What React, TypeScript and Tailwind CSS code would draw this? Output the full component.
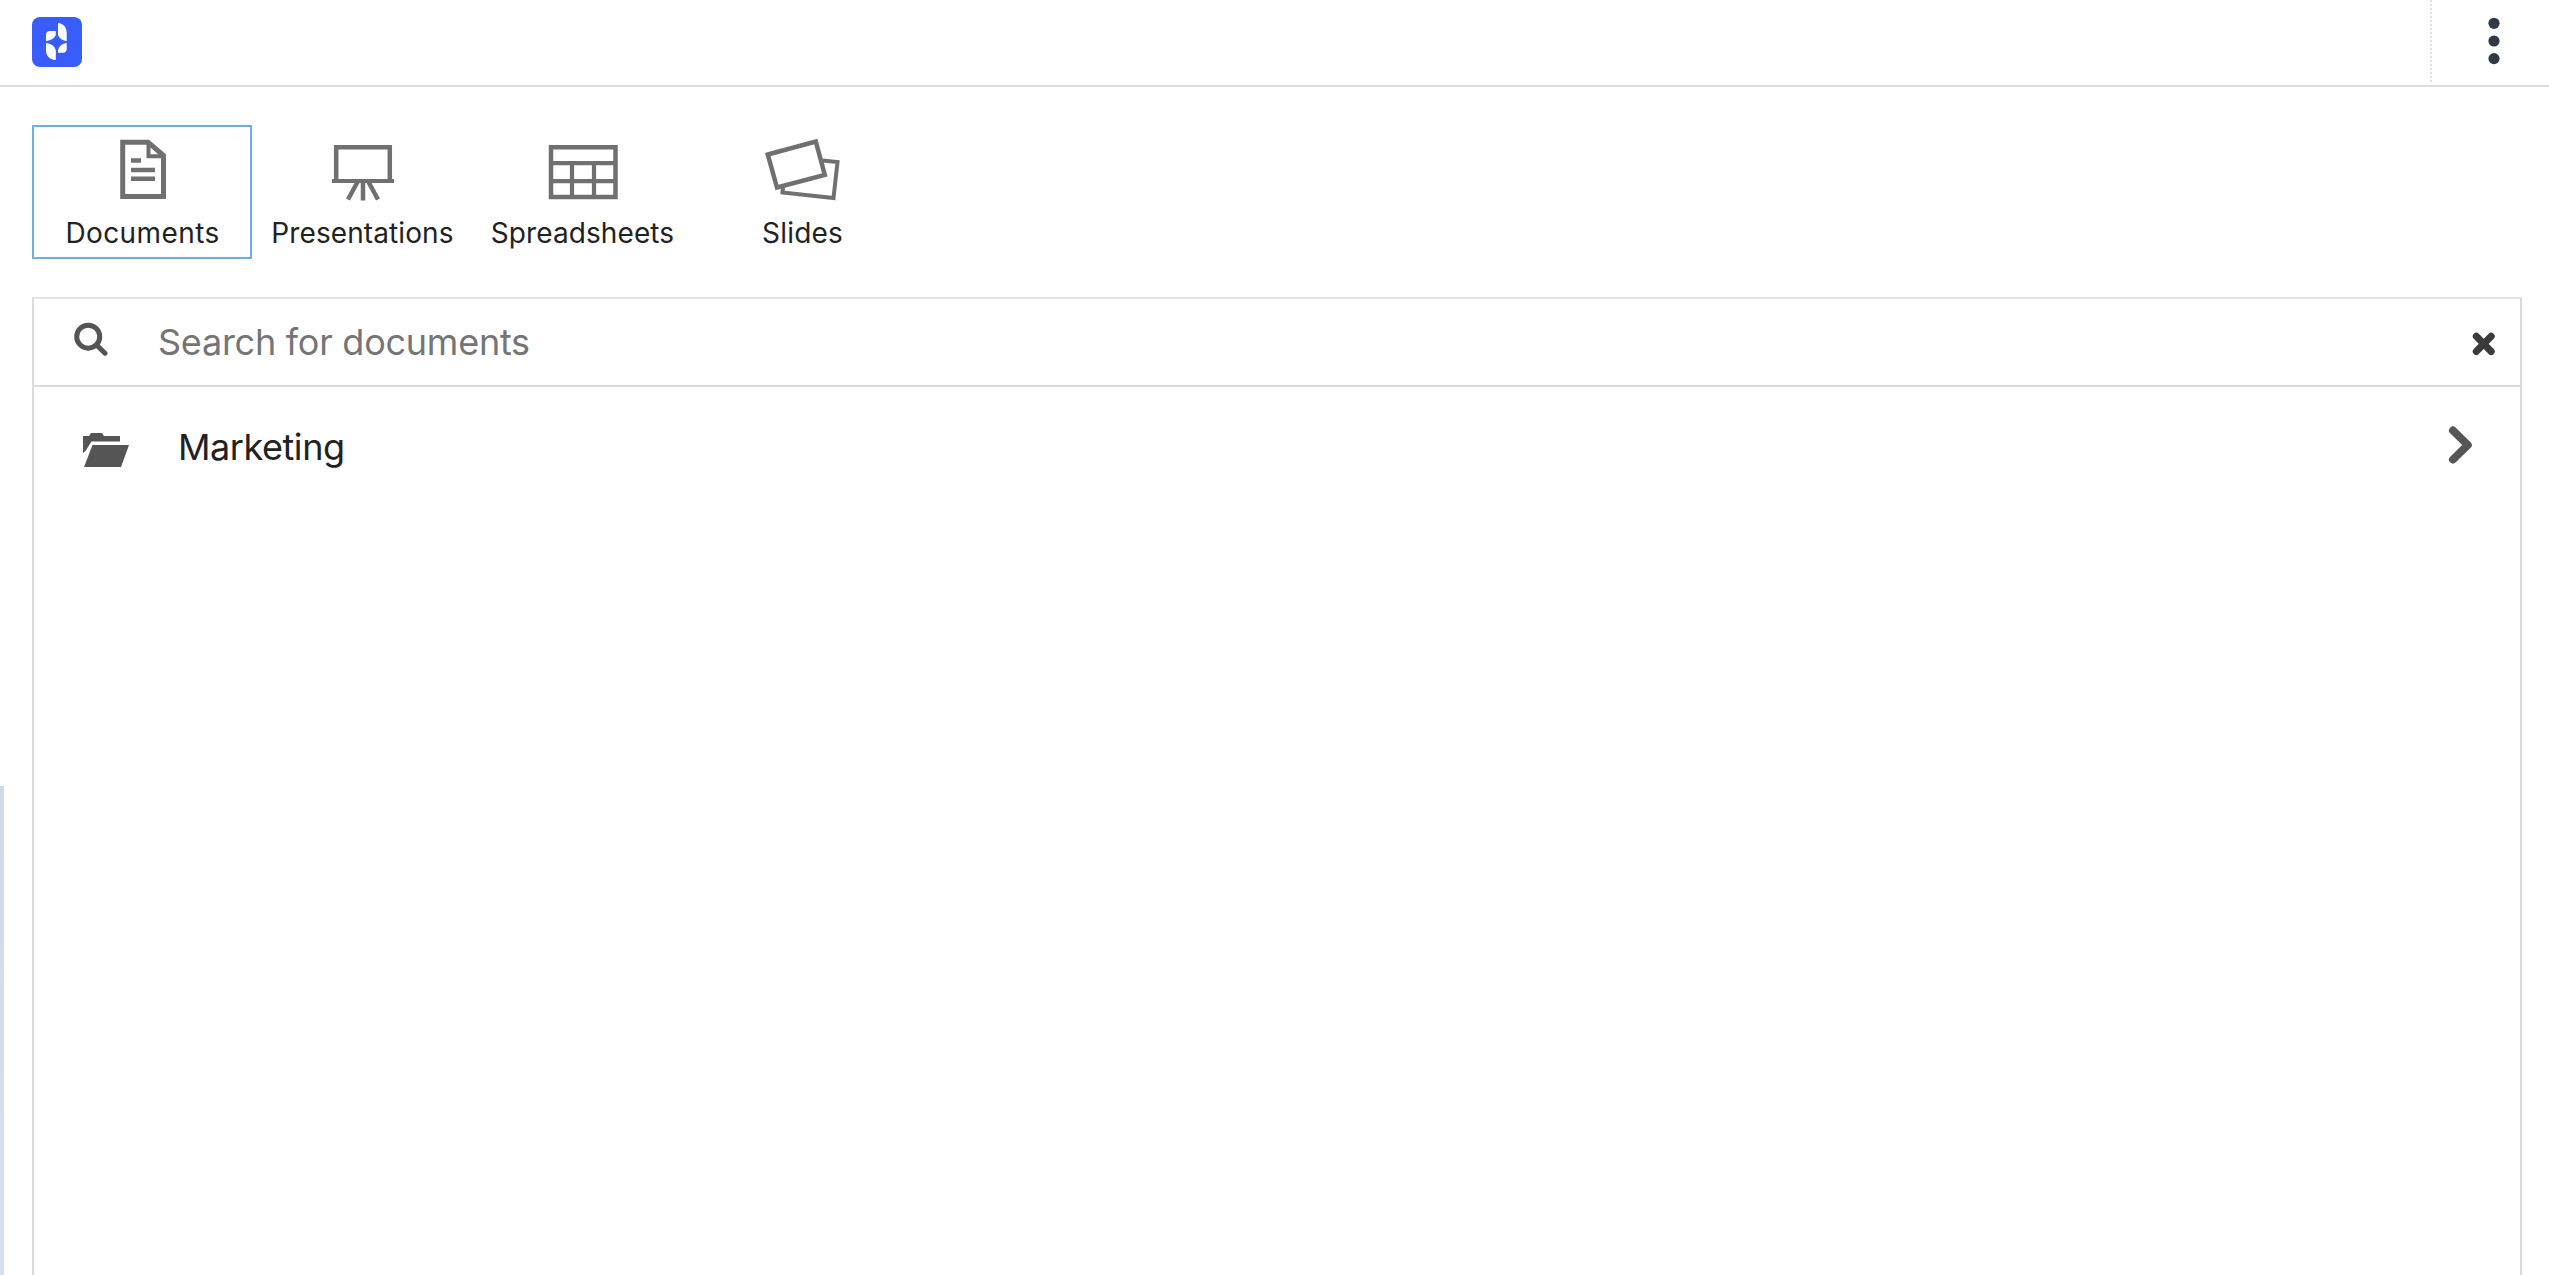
import { useState } from 'react';
import type { ReactNode } from 'react';

const TABS: { id: string; label: string; tracking: string; icon: ReactNode }[] = [
  {
    id: 'documents',
    label: 'Documents',
    tracking: 'tracking-[0.4px]',
    icon: (
      <>
        <path d="M20.7 5.2H46L61.5 18.5V59.5H20.7z" strokeWidth="5" />
        <path d="M46.5 5V19.3H61" strokeWidth="4" />
        <path d="M29 23.5H39M29 33H53M29 41.8H53" />
      </>
    ),
  },
  {
    id: 'presentations',
    label: 'Presentations',
    tracking: 'tracking-[0.1px]',
    icon: (
      <>
        <path d="M14.2 44V10.2H67.8V44" />
        <path d="M10 44H72" strokeWidth="4" />
        <path d="M41 45V63.5M35.5 45L26 62.5M46.5 45L56 62.5" />
      </>
    ),
  },
  {
    id: 'spreadsheets',
    label: 'Spreadsheets',
    tracking: 'tracking-[0.1px]',
    icon: (
      <>
        <path d="M9 10.2H73.5V60H9z" />
        <path d="M9 26.2H73.5M9 44.1H73.5M30 26V60M52 26V60" strokeWidth="4.2" />
      </>
    ),
  },
  {
    id: 'slides',
    label: 'Slides',
    tracking: 'tracking-[0.2px]',
    icon: (
      <>
        <path d="M5.8 17.5L53.8 4.5L62.8 37.8L15 50.5z" />
        <path d="M60 23.5L75.5 25L71.5 61L20.5 55.5L21 50" strokeWidth="4" />
      </>
    ),
  },
];

function Logo() {
  return (
    <svg width="50" height="50" viewBox="0 0 50 50">
      <rect width="50" height="50" rx="8" fill="#395dfb" />
      <path d="M14 18Q14 14 18 14H23.8V18Q22 23 14 24.2zM26 6C31.5 6.5 34.7 10.5 34.7 15.5V24.2Q27.5 23 26 18zM14 26Q22 27 23.8 33V43C17.5 42.5 14 39 14 33zM34.7 26V31.8Q34.7 35.8 30.7 35.8H26V33Q27.5 27 34.7 26z" fill="#fff" />
    </svg>
  );
}

export default function App() {
  const [activeTab, setActiveTab] = useState('documents');
  const [query, setQuery] = useState('');

  return (
    <div className="relative flex h-screen flex-col overflow-hidden bg-white font-['Inter','Liberation_Sans',sans-serif] text-[#222]">
      <header className="flex h-[87px] shrink-0 items-start justify-between border-b-2 border-[#dcdddd] pl-8">
        <div className="pt-[17px]">
          <Logo />
        </div>
        <div className="flex h-[83px]">
          <div className="w-[2px] bg-[repeating-linear-gradient(to_bottom,#e2e2e2_0_2px,#fff_2px_4px)]" />
          <button className="w-[117px]" aria-label="More">
            <svg width="117" height="83" fill="#2f3a45">
              <circle cx="62" cy="23.3" r="5.6" />
              <circle cx="62" cy="41" r="5.6" />
              <circle cx="62" cy="58.6" r="5.6" />
            </svg>
          </button>
        </div>
      </header>

      <nav className="mt-[38px] flex shrink-0 pl-8">
        {TABS.map((tab) => (
          <button
            key={tab.id}
            onClick={() => setActiveTab(tab.id)}
            className={`flex h-[134px] w-[220px] flex-col items-center border-2 pt-[10px] ${
              activeTab === tab.id ? 'border-[#6daeea]' : 'border-transparent'
            }`}
          >
            <svg width="80" height="64" viewBox="0 0 80 64" fill="none" stroke="#707070" strokeWidth="4.5" className="shrink-0">
              {tab.icon}
            </svg>
            <span className={`mt-[14px] pl-px text-[28px] leading-[37px] whitespace-nowrap ${tab.tracking}`}>{tab.label}</span>
          </button>
        ))}
      </nav>

      <main className="mx-8 mt-[38px] mr-[27px] flex flex-1 flex-col border-x-2 border-t-2 border-[#dcdcdc] border-t-[#e3e3e3]">
        <div className="flex h-[88px] shrink-0 items-center border-b-2 border-[#dcdcdc]">
          <svg width="34" height="34" viewBox="0 0 34 34" fill="none" stroke="#555" className="mr-[50px] mb-[6px] ml-[40px] shrink-0">
            <circle cx="14.2" cy="14.7" r="11.5" strokeWidth="5" />
            <path d="M22.5 23L31 31.2" strokeWidth="5" strokeLinecap="round" />
          </svg>
          <input
            value={query}
            onChange={(e) => setQuery(e.target.value)}
            placeholder="Search for documents"
            className="h-full min-w-0 flex-1 text-[36px] tracking-[-0.25px] outline-none placeholder:text-[#757575]"
          />
          <button onClick={() => setQuery('')} aria-label="Clear" className="mt-[3px] mr-[24px]">
            <svg width="24" height="24" viewBox="0 0 24 24" stroke="#3b3b3b" strokeWidth="7" strokeLinecap="round">
              <path d="M4.3 4.3L19.2 19.5M19.2 4.3L4.3 19.5" />
            </svg>
          </button>
        </div>

        <div className="flex h-[116px] items-center">
          <svg width="46" height="34" viewBox="0 0 46 34" fill="#555" className="mt-[10px] mr-[49px] ml-[49px] shrink-0">
            <path d="M0 20V3H6L8 0H19L21 3H37V8.5H8.5L2.5 18z" />
            <path d="M9.5 12H46L38 34H1z" />
          </svg>
          <span className="mt-[3px] flex-1 text-[36px] leading-[44px] tracking-[-0.45px]">Marketing</span>
          <svg width="26" height="40" viewBox="0 0 26 40" fill="none" stroke="#555" strokeWidth="8" strokeLinecap="round" strokeLinejoin="round" className="mr-[46px]">
            <path d="M5 5.5L19.8 20L5 34.5" />
          </svg>
        </div>
      </main>

      <div className="absolute top-[786px] bottom-0 left-0 w-1 bg-gradient-to-b from-[#cfd9ea] to-[#d7e1f1]" />
    </div>
  );
}
